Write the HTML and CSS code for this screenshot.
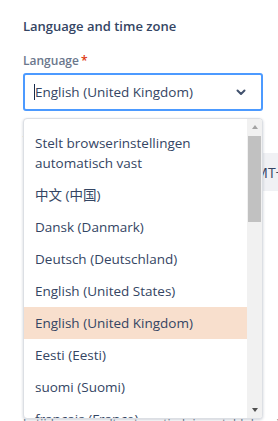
FILE: index.html
```html
<!DOCTYPE html>
<html lang="nl">
<head>
<meta charset="utf-8">
<link rel="stylesheet" href="styles.css">
</head>
<body>
<div class="page">
  <h2 class="heading">Language and time zone</h2>
  <div class="field">
    <label class="label">Language<span class="req">*</span></label>
    <div class="select">
      <span class="caret"></span><span class="value">English (United Kingdom)</span>
      <svg class="chevron" width="12" height="12" viewBox="0 0 12 12"><path d="M2.5 4.5 L6 8 L9.5 4.5" fill="none" stroke="#42526E" stroke-width="2" stroke-linecap="round" stroke-linejoin="round"/></svg>
    </div>
  </div>
  <div class="field tz">
    <label class="label">Time zone</label>
    <div class="tz-select"><span class="tz-value">(GMT+01:00) Amsterdam</span></div>
  </div>
  <p class="note">Je tijdzone wordt automatisch ingesteld door je browser. Beheer</p>

  <div class="menu">
    <ul class="options">
      <li>Stelt browserinstellingen automatisch vast</li>
      <li>中文 (中国)</li>
      <li>Dansk (Danmark)</li>
      <li>Deutsch (Deutschland)</li>
      <li>English (United States)</li>
      <li class="active">English (United Kingdom)</li>
      <li>Eesti (Eesti)</li>
      <li>suomi (Suomi)</li>
      <li>français (France)</li>
    </ul>
    <div class="scrollbar">
      <span class="arrow up"></span>
      <span class="thumb"></span>
      <span class="arrow down"></span>
    </div>
  </div>
</div>
</body>
</html>
```
FILE: styles.css
```css
html, body {
  margin: 0;
  padding: 0;
  background: #fff;
  overflow: hidden;
}
body {
  font-family: "Open Sans", "Noto Sans", "Noto Sans CJK SC", sans-serif;
  color: #172B4D;
  width: 278px;
  height: 421px;
}
.page {
  position: relative;
  padding: 16px 15px 0 23px;
}
.heading {
  margin: 0;
  font-size: 13px;
  line-height: 20px;
  font-weight: 600;
  color: #344563;
}
.field {
  margin-top: 17px;
}
.label {
  display: block;
  font-size: 12px;
  line-height: 16px;
  font-weight: 600;
  color: #6B778C;
}
.req {
  color: #DE350B;
  margin-left: 2px;
}
.select {
  margin-top: 4px;
  height: 38px;
  box-sizing: border-box;
  border: 2px solid #4C9AFF;
  border-radius: 3px;
  display: flex;
  align-items: center;
  padding: 0 14px 0 9px;
  font-size: 13.5px;
}
.caret {
  width: 1px;
  height: 16px;
  background: #172B4D;
}
.value {
  flex: 1;
  color: #344563;
}
.chevron {
  display: block;
}
.tz {
  margin-top: 22px;
}
.tz-select {
  margin-top: 4px;
  height: 38px;
  width: 300px;
  box-sizing: border-box;
  background: #F0F1F4;
  border-radius: 3px;
  display: flex;
  align-items: center;
  padding-left: 218px;
  font-size: 14px;
  color: #344563;
  white-space: nowrap;
}
.note {
  margin: 224px 0 0 0;
  font-size: 12px;
  color: #6B778C;
  white-space: nowrap;
}
.menu {
  position: absolute;
  top: 118px;
  left: 23px;
  width: 240px;
  height: 301px;
  box-sizing: border-box;
  background: #fff;
  border: 1px solid #DCDFE4;
  border-radius: 4px;
  box-shadow: 0 1px 3px rgba(9, 30, 66, 0.2);
  display: flex;
  overflow: hidden;
}
.options {
  list-style: none;
  margin: 0;
  padding: 8px 0 0 0;
  flex: 1;
  min-width: 0;
}
.options li {
  padding: 6px 12px 6px 11px;
  font-size: 13.5px;
  line-height: 20px;
  color: #344563;
}
.options li.active {
  background: #F8DFCD;
}
.scrollbar {
  width: 15px;
  flex: none;
  background: #F1F1F1;
  display: flex;
  flex-direction: column;
  align-items: center;
}
.arrow {
  width: 0;
  height: 0;
  border-left: 3.5px solid transparent;
  border-right: 3.5px solid transparent;
}
.arrow.up {
  margin-top: 6px;
  border-bottom: 4px solid #A3A3A3;
}
.arrow.down {
  margin-top: auto;
  margin-bottom: 6px;
  border-top: 4px solid #505050;
}
.thumb {
  margin-top: 7px;
  width: 13px;
  height: 86px;
  background: #C1C1C1;
}
```
